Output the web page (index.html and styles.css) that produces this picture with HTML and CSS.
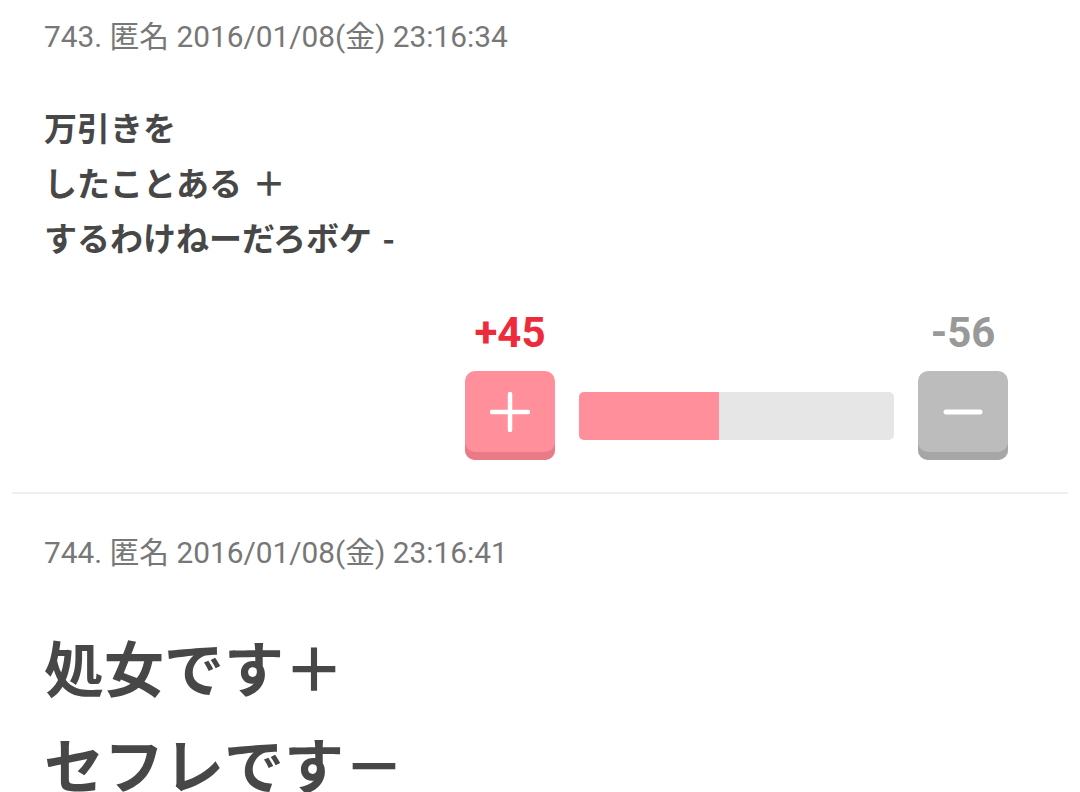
FILE: index.html
```html
<!DOCTYPE html>
<html lang="ja">
<head>
<meta charset="utf-8">
<link rel="stylesheet" href="styles.css">
</head>
<body>
<div class="post first">
  <div class="meta">743. 匿名 2016/01/08(金) 23:16:34</div>
  <div class="body">万引きを<br>したことある ＋<br>するわけねーだろボケ -</div>
  <div class="vote">
    <div class="col">
      <div class="count plus">+45</div>
      <div class="btn btn-plus">
        <svg width="40" height="40" viewBox="0 0 40 40"><path d="M20 2V38M2 20H38" stroke="#fff" stroke-width="4.5" stroke-linecap="round"/></svg>
      </div>
    </div>
    <div class="bar"><div class="fill" style="width:44.6%"></div></div>
    <div class="col">
      <div class="count minus">-56</div>
      <div class="btn btn-minus">
        <svg width="40" height="40" viewBox="0 0 40 40"><path d="M3 20H37" stroke="#fff" stroke-width="5" stroke-linecap="round"/></svg>
      </div>
    </div>
  </div>
</div>
<div class="divider"></div>
<div class="post second">
  <div class="meta">744. 匿名 2016/01/08(金) 23:16:41</div>
  <div class="body big">処女です＋<br>セフレです－</div>
</div>
</body>
</html>
```

FILE: styles.css
```css
html, body {
  margin: 0;
  padding: 0;
  background: #fff;
  overflow: hidden;
}
body {
  width: 1080px;
  height: 792px;
  font-family: Roboto, "Noto Sans CJK JP", sans-serif;
}
.post {
  padding: 0 72px 0 44px;
}
.first {
  padding-top: 17px;
  padding-bottom: 32px;
}
.second {
  padding-top: 39px;
}
.meta {
  font-size: 29.8px;
  line-height: 40px;
  color: #777;
  font-family: Roboto, "Noto Sans CJK JP", sans-serif;
}
.body {
  margin-top: 43px;
  font-family: "Noto Sans CJK JP", sans-serif;
  font-weight: 700;
  font-size: 33px;
  line-height: 55px;
  color: #474747;
  word-spacing: 3px;
}
.body.big {
  margin-top: 44px;
  font-size: 60px;
  line-height: 97px;
  word-spacing: 0;
}
.vote {
  margin-top: 43px;
  display: flex;
  justify-content: flex-end;
  align-items: flex-end;
  gap: 24px;
}
.col {
  width: 90px;
  display: flex;
  flex-direction: column;
  align-items: center;
}
.count {
  font-family: Roboto, sans-serif;
  font-weight: 700;
  font-size: 42px;
  line-height: 50px;
  margin-bottom: 13px;
  white-space: nowrap;
}
.count.plus { color: #ee2b3b; }
.count.minus { color: #999; }
.btn {
  width: 90px;
  height: 89px;
  box-sizing: border-box;
  border-radius: 10px;
  padding-bottom: 8px;
  display: flex;
  align-items: center;
  justify-content: center;
}
.btn-plus {
  background: #ff909b;
  box-shadow: inset 0 -8px 0 #ea7a86;
}
.btn-minus {
  background: #bcbcbc;
  box-shadow: inset 0 -8px 0 #a6a6a6;
}
.bar {
  width: 315px;
  height: 48px;
  border-radius: 5px;
  background: #e6e6e6;
  overflow: hidden;
  margin-bottom: 20px;
  display: flex;
}
.fill {
  background: #ff8f9b;
  height: 100%;
}
.divider {
  margin: 0 12px;
  height: 2px;
  background: #efefef;
}
```
